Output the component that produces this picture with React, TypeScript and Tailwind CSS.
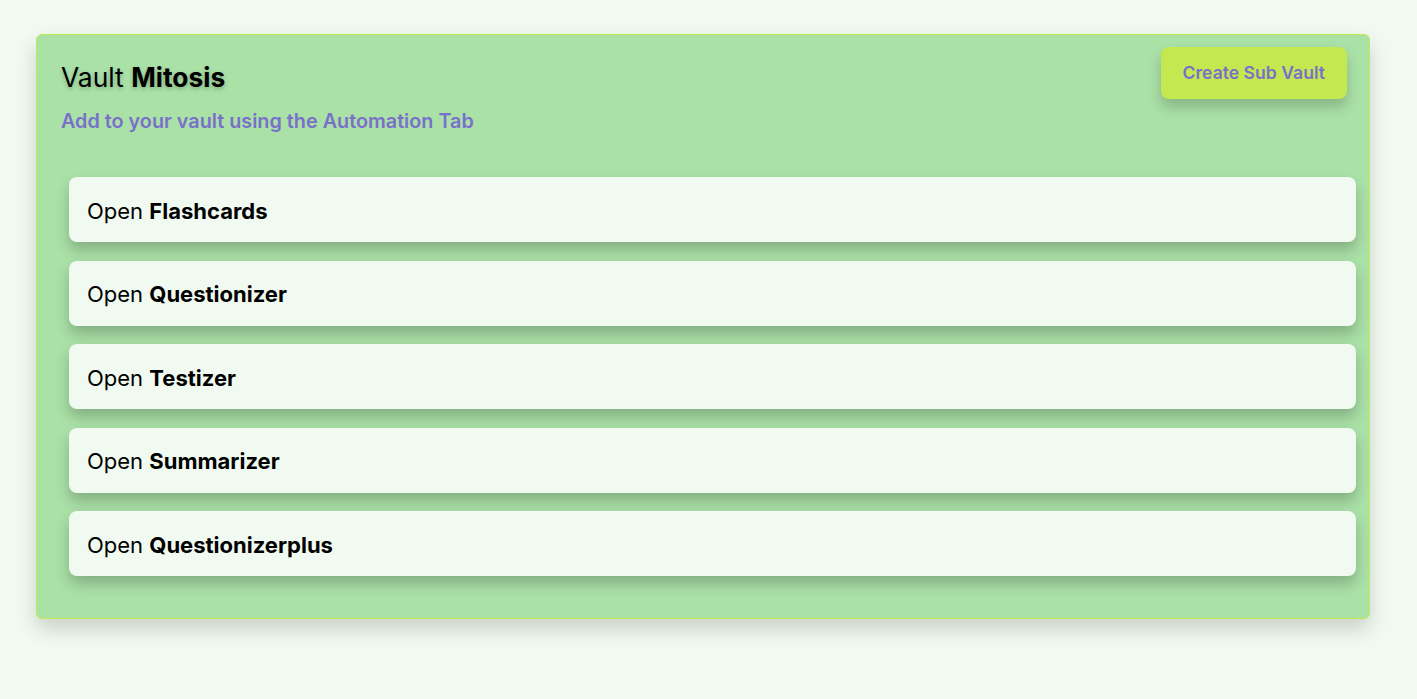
import React from 'react';

const tools = ['Flashcards', 'Questionizer', 'Testizer', 'Summarizer', 'Questionizerplus'];

export default function App() {
  return (
    <div className="min-h-screen bg-[#f0faf0] pt-[34px] pl-[36px] pr-[47px] font-['Inter',sans-serif]">
      <div className="rounded-md border border-[#c4e84f] bg-[#aae1a7] shadow-[0_10px_20px_rgba(0,0,0,0.16)] pb-[42px]">
        <div className="flex items-start justify-between pl-[24px] pr-[22px] pt-[12px]">
          <div className="pt-[13px]">
            <h1 className="text-[26.4px] leading-[35px] text-black [text-shadow:0_2px_4px_rgba(0,0,0,0.25)]">
              Vault <span className="font-bold">Mitosis</span>
            </h1>
            <p className="mt-[13px] text-[19.8px] leading-[26px] font-semibold text-[#7a70c9]">
              Add to your vault using the Automation Tab
            </p>
          </div>
          <button className="h-[52px] px-[22px] rounded-lg bg-[#c4e84f] text-[17.6px] font-semibold text-[#7a70c9] shadow-[0_8px_14px_rgba(0,0,0,0.2)]">
            Create Sub Vault
          </button>
        </div>
        <div className="mt-[43px] ml-[32px] mr-[13px] flex flex-col gap-[18.5px]">
          {tools.map((t) => (
            <div
              key={t}
              className="h-[65px] flex items-center pt-[3px] px-[18px] rounded-lg bg-[#f0faf0] shadow-[0_8px_14px_rgba(0,0,0,0.22)] text-[22px] text-black"
            >
              Open&nbsp;<span className="font-bold">{t}</span>
            </div>
          ))}
        </div>
      </div>
    </div>
  );
}
